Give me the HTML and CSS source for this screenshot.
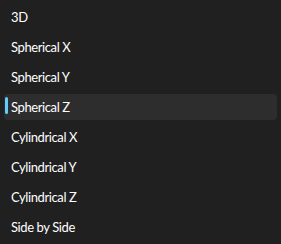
FILE: index.html
```html
<!DOCTYPE html>
<html>
<head>
<meta charset="utf-8">
<link rel="stylesheet" href="styles.css">
</head>
<body>
<ul class="list">
  <li class="item">3D</li>
  <li class="item">Spherical X</li>
  <li class="item">Spherical Y</li>
  <li class="item selected">Spherical Z</li>
  <li class="item">Cylindrical X</li>
  <li class="item">Cylindrical Y</li>
  <li class="item">Cylindrical Z</li>
  <li class="item">Side by Side</li>
</ul>
</body>
</html>
```
FILE: styles.css
```css
html, body {
  margin: 0;
  padding: 0;
  background: #202020;
  width: 281px;
  height: 244px;
  overflow: hidden;
}
.list {
  list-style: none;
  margin: 0;
  padding: 4px 4px 0 4px;
  display: flex;
  flex-direction: column;
  gap: 4px;
}
.item {
  position: relative;
  height: 26px;
  line-height: 26px;
  padding-left: 7px;
  border-radius: 4px;
  font-family: "Segoe UI", "Lato", sans-serif;
  font-size: 13px;
  letter-spacing: -0.4px;
  color: #ffffff;
}
.item.selected {
  background: #2d2d2d;
}
.item.selected::before {
  content: "";
  position: absolute;
  left: 1px;
  top: 3px;
  width: 3px;
  height: 17px;
  border-radius: 2px;
  background: #60cdff;
}
```
